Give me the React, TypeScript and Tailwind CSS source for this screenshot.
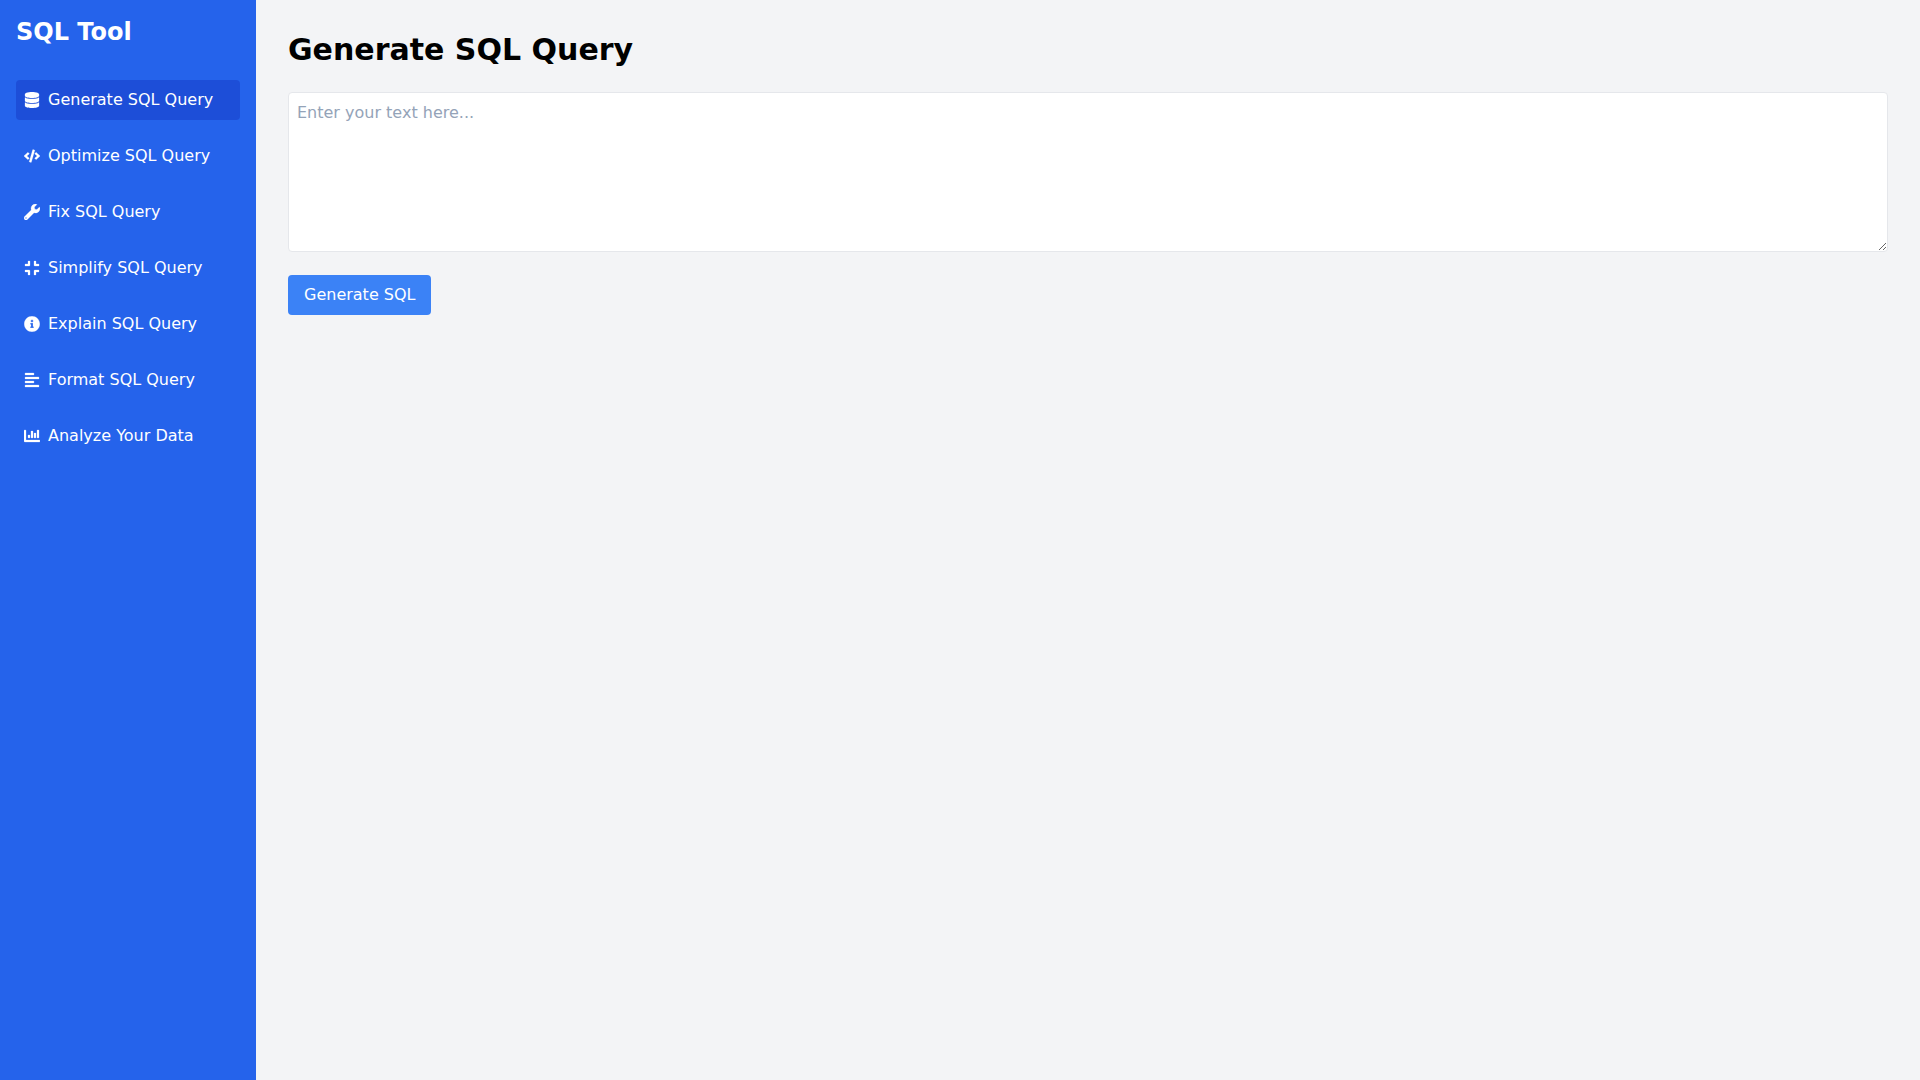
import React, { useState } from 'react';
import { FaDatabase, FaCode, FaWrench, FaCompress, FaInfoCircle, FaAlignLeft, FaChartBar } from 'react-icons/fa';

const navItems = [
  { label: 'Generate SQL Query', icon: FaDatabase },
  { label: 'Optimize SQL Query', icon: FaCode },
  { label: 'Fix SQL Query', icon: FaWrench },
  { label: 'Simplify SQL Query', icon: FaCompress },
  { label: 'Explain SQL Query', icon: FaInfoCircle },
  { label: 'Format SQL Query', icon: FaAlignLeft },
  { label: 'Analyze Your Data', icon: FaChartBar },
];

export default function App() {
  const [active, setActive] = useState('Generate SQL Query');

  return (
    <div className="flex h-screen bg-[#f3f4f6] font-['DejaVu_Sans',sans-serif]">
      <aside className="w-64 shrink-0 bg-[#2563eb] p-4 text-white">
        <h1 className="mb-8 text-2xl font-bold">SQL Tool</h1>
        <nav>
          <ul>
            {navItems.map((item) => (
              <li key={item.label} className="mb-4">
                <button
                  onClick={() => setActive(item.label)}
                  className={`flex w-full items-center rounded px-2 py-2 text-left ${active === item.label ? 'bg-[#1d4ed8]' : ''}`}
                >
                  <item.icon className="mr-2 h-4 w-4 stroke-[8]" />
                  {item.label}
                </button>
              </li>
            ))}
          </ul>
        </nav>
      </aside>

      <main className="flex-1 p-8">
        <h2 className="mb-6 text-3xl font-bold text-black">Generate SQL Query</h2>
        <textarea
          className="mb-4 h-40 w-full rounded border border-[#e5e7eb] bg-white p-2 placeholder:text-[#94a3b8]"
          placeholder="Enter your text here..."
        />
        <button className="rounded bg-[#3b82f6] px-4 py-2 text-white">Generate SQL</button>
      </main>
    </div>
  );
}
